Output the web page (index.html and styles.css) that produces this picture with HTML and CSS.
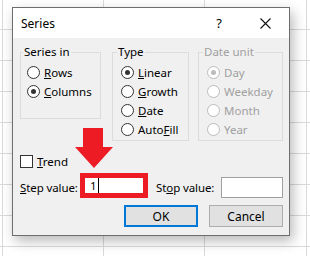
FILE: index.html
```html
<!DOCTYPE html>
<html lang="en">
<head>
    <meta charset="UTF-8">
    <title>Series</title>
    <link rel="stylesheet" href="styles.css">
</head>
<body>
    <div class="sheet">
        <div class="dialog">
            <div class="titlebar">
                <span class="title">Series</span>
                <span class="help">?</span>
                <svg class="close" width="11" height="11" viewBox="0 0 11 11">
                    <path d="M0.5 0.5 L10.5 10.5 M10.5 0.5 L0.5 10.5" stroke="#111" stroke-width="1.1" fill="none"/>
                </svg>
            </div>

            <div class="content">
                <div class="groups">
                    <fieldset class="group group-series">
                        <legend>Series in</legend>
                        <div class="opt"><span class="radio"></span><span><u>R</u>ows</span></div>
                        <div class="opt"><span class="radio on"></span><span><u>C</u>olumns</span></div>
                    </fieldset>

                    <fieldset class="group group-type">
                        <legend>Type</legend>
                        <div class="opt"><span class="radio on"></span><span><u>L</u>inear</span></div>
                        <div class="opt"><span class="radio"></span><span><u>G</u>rowth</span></div>
                        <div class="opt"><span class="radio"></span><span><u>D</u>ate</span></div>
                        <div class="opt"><span class="radio"></span><span>Auto<u>F</u>ill</span></div>
                    </fieldset>

                    <fieldset class="group group-date disabled">
                        <legend>Date unit</legend>
                        <div class="opt"><span class="radio on"></span><span>Day</span></div>
                        <div class="opt"><span class="radio"></span><span>Weekday</span></div>
                        <div class="opt"><span class="radio"></span><span>Month</span></div>
                        <div class="opt"><span class="radio"></span><span>Year</span></div>
                    </fieldset>
                </div>

                <div class="trend">
                    <span class="check"></span><span><u>T</u>rend</span>
                </div>

                <div class="values">
                    <span class="label"><u>S</u>tep value:</span>
                    <div class="step-box"><span class="caret">1</span></div>
                    <span class="label stop-label">St<u>o</u>p value:</span>
                    <div class="stop-box"></div>
                </div>

                <div class="buttons">
                    <button class="btn btn-ok">OK</button>
                    <button class="btn">Cancel</button>
                </div>
            </div>

            <!-- red annotation arrow -->
            <svg class="arrow" width="38" height="41" viewBox="0 0 38 41">
                <polygon points="8,0 28,0 28,19 38,19 19,40 0,19 8,19" fill="#ed1c24"/>
            </svg>
        </div>
    </div>
</body>
</html>
```

FILE: styles.css
```css
body {
    margin: 0;
    font-family: "Noto Sans", "Open Sans", sans-serif;
    font-size: 11.5px;
    color: #000;
}

.sheet {
    width: 310px;
    height: 256px;
    overflow: hidden;
    padding: 7px 0 0 12px;
    box-sizing: border-box;
    background-color: #fff;
    /* excel grid lines */
    background-image:
        linear-gradient(to right, transparent 2px, #dadada 2px, #dadada 3px, transparent 3px,
            transparent 103px, #dadada 103px, #dadada 104px, transparent 104px,
            transparent 204px, #dadada 204px, #dadada 205px, transparent 205px,
            transparent 306px, #dadada 306px, #dadada 307px, transparent 307px),
        repeating-linear-gradient(to bottom, transparent 0, transparent 29px, #dadada 29px, #dadada 30px, transparent 30px, transparent 31px);
}

.dialog {
    position: relative;
    width: 278px;
    height: 229px;
    box-sizing: border-box;
    border: 1px solid #6e6e6e;
    background-color: #f0f0f0;
    box-shadow: 3px 5px 12px rgba(0, 0, 0, 0.28);
}

.titlebar {
    height: 30px;
    background-color: #fff;
    display: flex;
    align-items: center;
    padding-left: 8px;
}

.title {
    flex: 1;
    font-size: 12px;
}

.help {
    font-size: 13px;
    margin-right: 38px;
}

.close {
    margin-right: 18px;
}

.content {
    padding: 6px 0 0 7px;
}

.groups {
    display: flex;
    align-items: flex-start;
}

.group {
    margin: 0;
    border: 1px solid #dcdcdc;
    padding: 3px 0 0 8px;
    box-sizing: border-box;
    height: 97px;
}

.group legend {
    padding: 0 1px;
    margin-left: -4px;
    line-height: 16px;
}

.group-series {
    width: 81px;
    height: 75px;
    padding-left: 6px;
    margin-right: 11px;
}

.group-type {
    width: 77px;
    margin-right: 9px;
}

.group-date {
    width: 85px;
}

.opt {
    display: flex;
    align-items: center;
    height: 19px;
    gap: 4px;
    white-space: nowrap;
}

.radio {
    flex: none;
    width: 11px;
    height: 11px;
    border: 1px solid #333;
    border-radius: 50%;
    background-color: #fff;
    position: relative;
}

.radio.on::after {
    content: "";
    position: absolute;
    left: 3px;
    top: 3px;
    width: 5px;
    height: 5px;
    border-radius: 50%;
    background-color: #333;
}

.disabled {
    color: #a0a0a0;
}

.disabled .radio {
    border-color: #bcbcbc;
}

.disabled .radio.on::after {
    background-color: #bcbcbc;
}

.trend {
    display: flex;
    align-items: center;
    gap: 4px;
    height: 16px;
    margin-top: 12px;
}

.check {
    width: 11px;
    height: 11px;
    border: 1px solid #333;
    background-color: #fff;
}

.values {
    display: flex;
    align-items: center;
    margin-top: 4px;
    height: 25px;
}

.label {
    flex: none;
    width: 60px;
    white-space: nowrap;
    margin-top: 4px;
    letter-spacing: -0.1px;
}

.step-box {
    flex: none;
    width: 68px;
    height: 25px;
    box-sizing: border-box;
    border: 5px solid #ed1c24;
    background-color: #fff;
    padding-left: 5px;
    line-height: 15px;
}

.caret {
    border-right: 1px solid #000;
    padding-right: 1px;
}

.stop-label {
    margin-left: 8px;
    width: 65px;
}

.stop-box {
    flex: none;
    width: 62px;
    height: 21px;
    box-sizing: border-box;
    border: 1px solid #a0a0a0;
    background-color: #fff;
    margin-top: 4px;
}

.buttons {
    display: flex;
    justify-content: flex-end;
    gap: 11px;
    margin-top: 7px;
    padding-right: 6px;
}

.btn {
    width: 74px;
    height: 22px;
    border: 1px solid #adadad;
    background-color: #e1e1e1;
    font-family: inherit;
    font-size: 12px;
    padding: 0;
    margin: 0;
}

.btn-ok {
    border: 2px solid #0078d7;
}

.arrow {
    position: absolute;
    left: 62px;
    top: 120px;
}
```
